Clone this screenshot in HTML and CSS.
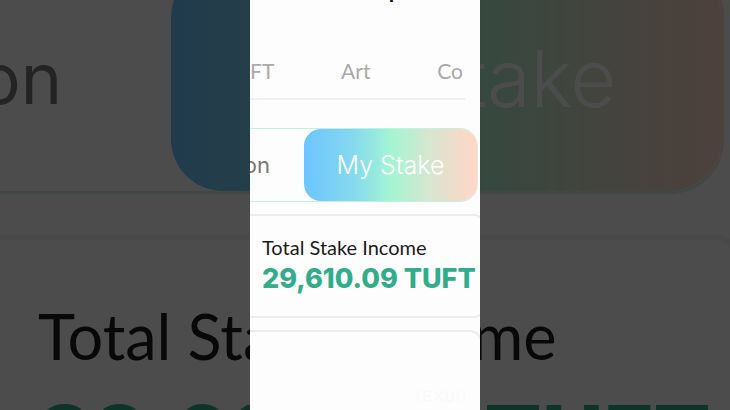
FILE: index.html
```html
<!DOCTYPE html>
<html lang="en">
<head>
    <meta charset="utf-8">
    <title>My Stake</title>
    <link rel="stylesheet" href="styles.css">
</head>
<body>
    <div class="stage">
        <div class="backdrop" aria-hidden="true">
            <div class="switch">
                <span class="option">on</span>
                <span class="option active">My Stake</span>
            </div>
            <div class="card">
                <p class="label">Total Stake Income</p>
                <p class="amount">29,610.09 TUFT</p>
            </div>
        </div>

        <main class="screen">
            <h1 class="title">p</h1>
            <nav class="tabs">
                <a href="#">FT</a>
                <a href="#">Art</a>
                <a href="#">Co</a>
            </nav>
            <div class="switch">
                <button type="button" class="option">on</button>
                <button type="button" class="option active">My Stake</button>
            </div>
            <section class="card">
                <p class="label">Total Stake Income</p>
                <p class="amount">29,610.09 TUFT</p>
            </section>
            <section class="card empty">
                <svg class="mark" width="52" height="16" viewBox="0 0 52 16" fill="none" stroke="#f9f9f9" stroke-width="2">
                    <path d="M3 2v12M16 3H9v10h7M9 8h6M20 3l8 10M28 3l-8 10M32 3v10h6V3M43 3v10M49 2v12" />
                </svg>
            </section>
        </main>
    </div>
</body>
</html>
```
FILE: styles.css
```css
body {
    margin: 0; background: #4c4c4c;
    font-family: Lato, "Liberation Sans", sans-serif;
}

p, h1 {
    margin: 0;
}

.stage {
    display: grid; grid-template-columns: 25fr 23fr 25fr;
    height: 100vh; overflow: hidden;
}

/* phone screen in the middle */
.screen {
    grid-column: 2; grid-row: 1; z-index: 1;
    display: flex; flex-direction: column;
    min-width: 0; min-height: 0; overflow: hidden;
    background: #fdfdfd;
}

.title {
    display: flex; justify-content: center; align-items: flex-end;
    height: 2px; padding-left: 60px; overflow: hidden;
    color: #111; font-size: 22px; line-height: 24px;
}

.tabs {
    display: flex; justify-content: space-between;
    margin-right: 15px; padding: 57px 2px 15px 0;
    border-bottom: 2px solid #eeeff0;
}

.tabs a {
    color: #a9a9a9; font-size: 21px; line-height: 24px;
    text-decoration: none;
}

.switch {
    display: flex; box-sizing: border-box;
    font-family: Inter, "Liberation Sans", sans-serif;
}

.option {
    display: flex; align-items: center; justify-content: flex-end;
    box-sizing: border-box; padding: 0; border: 0; background: none;
    color: #777; font-family: inherit;
}

.active {
    flex: 1; justify-content: center;
    background: linear-gradient(to right, #6cc5ff, #84d8ee 28%, #a3f5d3 50%, #d5e6cf 72%, #fcd8c8 96%);
    color: #fff;
}

.screen .switch {
    height: 74px; margin: 28px 2px 0 0;
    border: 1px solid #c4f0e4; border-left: 0; border-right-color: #f8e0d6;
    border-radius: 0 18px 18px 0;
}

.screen .option {
    width: 20px; margin-right: 34px; font-size: 22px;
}

.screen .active {
    width: auto; margin-right: 0; border-radius: 17px;
    font-size: 25px; font-weight: 300;
}

.card {
    box-sizing: border-box; background: #fdfdfd;
    border: 2px solid #ececf0;
}

.label {
    color: #1c1c1c;
}

.amount {
    color: #30ad8b; font-family: Inter, "Liberation Sans", sans-serif; font-weight: 800;
    white-space: nowrap;
}

.screen .card {
    flex: none;
    margin: 12px -3px 0 -12px; padding: 19px 0 19px 22px;
    border-radius: 8px;
}

.screen .empty {
    display: flex; flex: 1; justify-content: flex-end; align-items: flex-end;
    padding: 0 14px 6px 0;
    border-radius: 14px 14px 0 0; border-bottom: 0;
}

.screen .label {
    font-size: 20px; line-height: 24px;
}

.screen .amount {
    margin-top: 2px; font-size: 27px; line-height: 36px;
}

/* the same screen, enlarged and dimmed */
.backdrop {
    grid-column: 1 / -1; grid-row: 1;
    min-height: 0; overflow: hidden;
    background: #fff; filter: brightness(0.3);
}

.backdrop .switch {
    height: 232px; margin: -38px 6px 0 0;
    border: 3px solid #d4f2e8; border-left: 0; border-right-color: #f8e0d6;
    border-bottom-color: #d8ece4;
    border-radius: 0 54px 54px 0;
}

.backdrop .option {
    width: 62px; margin-right: 109px; font-size: 70px;
}

.backdrop .active {
    width: auto; margin-right: 0; border-radius: 52px;
    font-size: 79px; font-weight: 300;
}

.backdrop .card {
    margin: 40px -9px 0 -38px; padding: 58px 0 56px 70px;
    border: 6px solid #f4f4f6; border-radius: 24px;
}

.backdrop .label {
    font-size: 63px; line-height: 76px;
}

.backdrop .amount {
    margin-top: 6px; font-size: 85px; line-height: 114px;
}
```
